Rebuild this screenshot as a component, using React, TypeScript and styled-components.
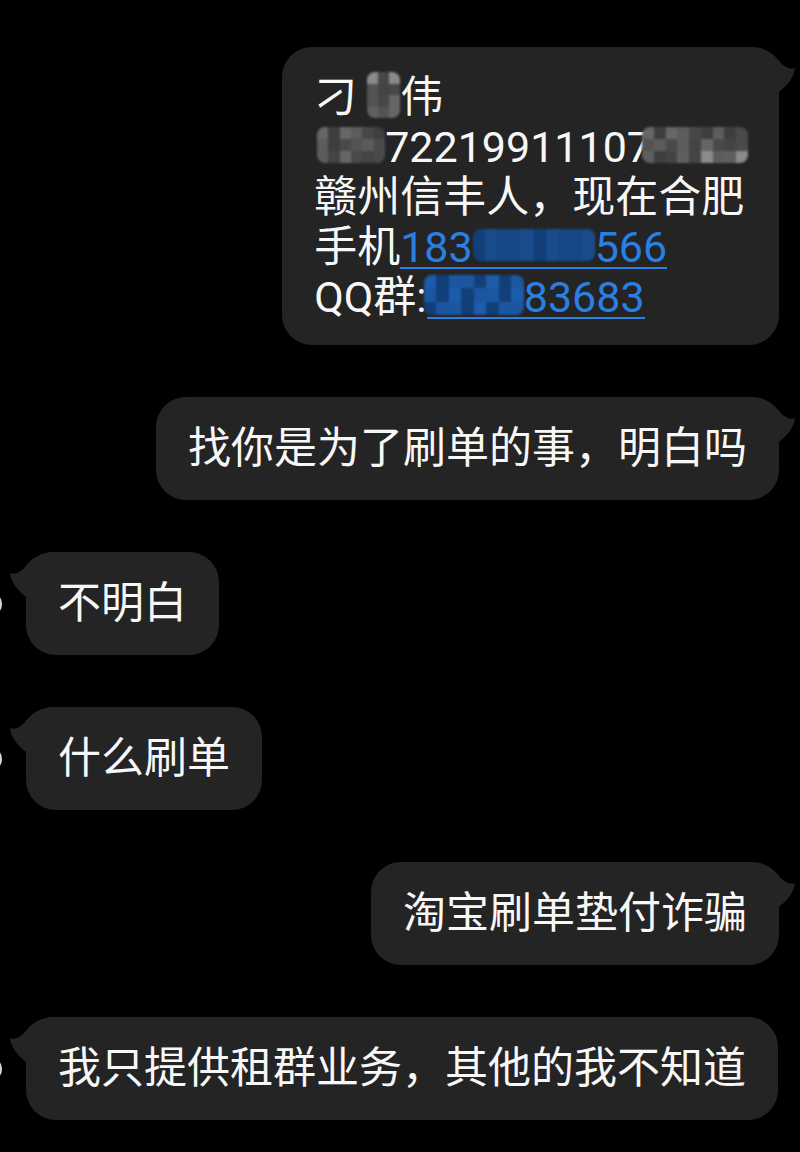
import React from "react";
import styled, { createGlobalStyle } from "styled-components";

const Global = createGlobalStyle`
  html, body {
    margin: 0;
    padding: 0;
    background: #000;
  }
  body {
    font-family: "Roboto", "Noto Sans CJK SC", sans-serif;
    color: #f7f7f7;
  }
`;

const BUBBLE = "#242424";
const LINK = "#2a7fe3";

const Page = styled.div`
  width: 800px;
  min-height: 1152px;
  background: #000;
  overflow: hidden;
  display: flex;
  flex-direction: column;
  gap: 52px;
  padding-top: 47px;
  box-sizing: border-box;
`;

const Row = styled.div<{ $sent?: boolean }>`
  display: flex;
  align-items: center;
  justify-content: ${(p) => (p.$sent ? "flex-end" : "flex-start")};
  padding-right: ${(p) => (p.$sent ? "21px" : "0")};
  gap: 24px;
`;

const SelectRing = styled.div`
  width: 20px;
  height: 20px;
  margin-left: -22px;
  border-radius: 50%;
  border: 2px solid #d8d8d8;
  flex: none;
`;

const Bubble = styled.div<{ $multi?: boolean }>`
  position: relative;
  background: ${BUBBLE};
  border-radius: 30px;
  padding: ${(p) => (p.$multi ? "25px 31px 23px 32px" : "26px 32px 27px 32px")};
  font-size: 43px;
  line-height: 50px;
  white-space: nowrap;
  color: #f7f7f7;
`;

const TailSvg = styled.svg<{ $sent?: boolean }>`
  position: absolute;
  top: 0;
  width: 48px;
  height: 60px;
  ${(p) => (p.$sent ? "left: calc(100% - 30px);" : "right: calc(100% - 30px); transform: scaleX(-1);")}
`;

const Tail = ({ sent }: { sent?: boolean }) => (
  <TailSvg $sent={sent} viewBox="0 0 48 60">
    <path
      d="M0,0 H2 C16,0 25,7 31,15 C35,20 41,23 46,21 C45,30 39,38 30,45 V60 H0 Z"
      fill={BUBBLE}
    />
  </TailSvg>
);

const Line = styled.div`
  display: flex;
  align-items: center;
  height: 50px;
`;

const Link = styled.span`
  display: inline-flex;
  align-items: center;
  height: 50px;
  color: ${LINK};
  background: linear-gradient(${LINK}, ${LINK}) no-repeat left calc(100% - 3px) / 100% 2px;
`;

const MosaicBox = styled.span<{ $w: number; $h: number; $ml: number; $cols: number }>`
  display: inline-grid;
  grid-template-columns: repeat(${(p) => p.$cols}, 1fr);
  grid-auto-rows: 1fr;
  width: ${(p) => p.$w}px;
  height: ${(p) => p.$h}px;
  margin-left: ${(p) => p.$ml}px;
  overflow: hidden;
  border-radius: 8px;
  filter: blur(1.3px);
  position: relative;
  top: -2px;
  flex: none;
`;

const Cell = styled.span<{ $c: string }>`
  background: ${(p) => p.$c};
`;

const GREYS = ["#4a4a4a", "#5c5c5c", "#3e3e3e", "#666666", "#535353", "#474747", "#8a8a8a", "#5f5f5f", "#444444"];
const BLUES = ["#174f94", "#1d5caa", "#123f78", "#1a4c8c", "#0f3a70", "#1b57a0", "#164888"];

const Mosaic = ({
  w,
  h,
  ml = 0,
  cell = 12,
  palette,
  seed = 1,
}: {
  w: number;
  h: number;
  ml?: number;
  cell?: number;
  palette: string[];
  seed?: number;
}) => {
  const cols = Math.max(1, Math.round(w / cell));
  const rows = Math.max(1, Math.round(h / cell));
  const cells = [];
  for (let i = 0; i < cols * rows; i++) {
    const idx = (i * 7 + seed * 3 + ((i * i) % 5)) % palette.length;
    cells.push(<Cell key={i} $c={palette[idx]} />);
  }
  return (
    <MosaicBox $w={w} $h={h} $ml={ml} $cols={cols}>
      {cells}
    </MosaicBox>
  );
};

type Msg = { sent: boolean; text: string };

const messages: Msg[] = [
  { sent: true, text: "找你是为了刷单的事，明白吗" },
  { sent: false, text: "不明白" },
  { sent: false, text: "什么刷单" },
  { sent: true, text: "淘宝刷单垫付诈骗" },
  { sent: false, text: "我只提供租群业务，其他的我不知道" },
];

export default function App() {
  return (
    <>
      <Global />
      <Page>
        <Row $sent>
          <Bubble $multi>
            <Tail sent />
            <Line>
              刁<Mosaic w={33} h={46} ml={10} palette={GREYS} seed={2} cell={11} />伟
            </Line>
            <Line>
              <Mosaic w={68} h={36} ml={3} palette={GREYS} seed={4} />
              72219911107
              <Mosaic w={106} h={36} ml={-9} palette={GREYS} seed={1} />
            </Line>
            <Line>赣州信丰人，现在合肥</Line>
            <Line>
              手机
              <Link>
                183
                <Mosaic w={122} h={32} palette={BLUES} seed={3} />
                566
              </Link>
            </Line>
            <Line>
              QQ群:
              <Link>
                <Mosaic w={100} h={40} ml={-3} palette={BLUES} seed={5} />
                83683
              </Link>
            </Line>
          </Bubble>
        </Row>
        {messages.map((m, i) => (
          <Row key={i} $sent={m.sent}>
            {!m.sent && <SelectRing />}
            <Bubble>
              <Tail sent={m.sent} />
              {m.text}
            </Bubble>
          </Row>
        ))}
      </Page>
    </>
  );
}
